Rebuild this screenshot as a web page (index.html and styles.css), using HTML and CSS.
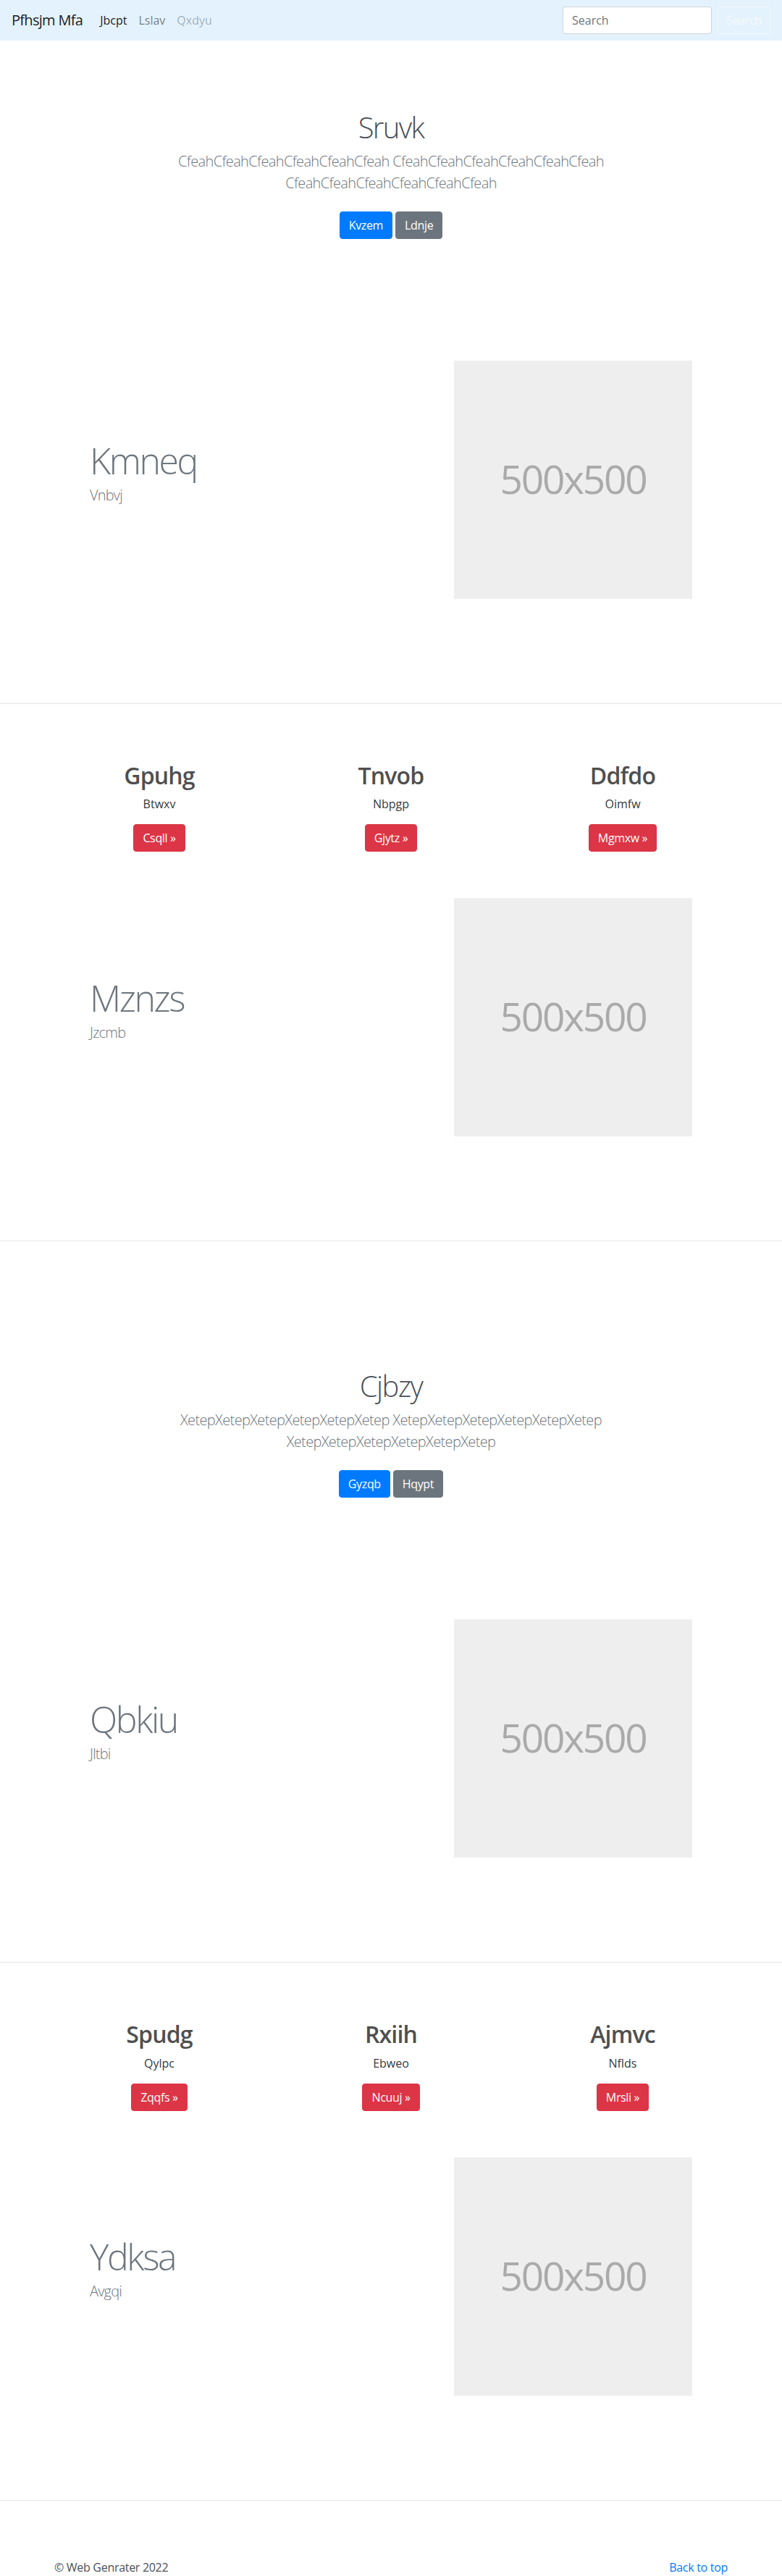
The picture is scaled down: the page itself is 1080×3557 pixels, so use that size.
FILE: index.html
```
<!DOCTYPE html>
<html lang="en">
<head>
<meta charset="utf-8">
<title>Pfhsjm Mfa</title>
<link rel="stylesheet" href="styles.css">
</head>
<body>
<nav class="navbar">
  <a class="brand" href="#">Pfhsjm Mfa</a>
  <ul class="nav-links">
    <li><a class="nav-link active" href="#">Jbcpt</a></li>
    <li><a class="nav-link" href="#">Lslav</a></li>
    <li><a class="nav-link disabled" href="#">Qxdyu</a></li>
  </ul>
  <form class="search-form">
    <input class="search-input" type="search" placeholder="Search">
    <button class="btn btn-outline-light" type="button">Search</button>
  </form>
</nav>

<main>
  <section class="hero">
    <div class="hero-inner">
      <h1 class="hero-title">Sruvk</h1>
      <p class="lead muted">CfeahCfeahCfeahCfeahCfeahCfeah CfeahCfeahCfeahCfeahCfeahCfeah CfeahCfeahCfeahCfeahCfeahCfeah</p>
      <p class="hero-actions">
        <a class="btn btn-primary" href="#">Kvzem</a>
        <a class="btn btn-secondary" href="#">Ldnje</a>
      </p>
    </div>
  </section>

  <section class="featurette">
    <div class="feat-inner">
      <div class="feat-text">
        <h2 class="feat-heading">Kmneq</h2>
        <p class="lead muted">Vnbvj</p>
      </div>
      <div class="placeholder">500x500</div>
    </div>
  </section>

  <hr class="divider">

  <section class="marketing">
    <div class="col">
      <h2 class="col-heading">Gpuhg</h2>
      <p class="col-text">Btwxv</p>
      <p class="col-action"><a class="btn btn-danger" href="#">Csqll &raquo;</a></p>
    </div>
    <div class="col">
      <h2 class="col-heading">Tnvob</h2>
      <p class="col-text">Nbpgp</p>
      <p class="col-action"><a class="btn btn-danger" href="#">Gjytz &raquo;</a></p>
    </div>
    <div class="col">
      <h2 class="col-heading">Ddfdo</h2>
      <p class="col-text">Oimfw</p>
      <p class="col-action"><a class="btn btn-danger" href="#">Mgmxw &raquo;</a></p>
    </div>
  </section>

  <section class="featurette">
    <div class="feat-inner">
      <div class="feat-text">
        <h2 class="feat-heading">Mznzs</h2>
        <p class="lead muted">Jzcmb</p>
      </div>
      <div class="placeholder">500x500</div>
    </div>
  </section>

  <hr class="divider">

  <section class="hero">
    <div class="hero-inner">
      <h1 class="hero-title">Cjbzy</h1>
      <p class="lead muted">XetepXetepXetepXetepXetepXetep XetepXetepXetepXetepXetepXetep XetepXetepXetepXetepXetepXetep</p>
      <p class="hero-actions">
        <a class="btn btn-primary" href="#">Gyzqb</a>
        <a class="btn btn-secondary" href="#">Hqypt</a>
      </p>
    </div>
  </section>

  <section class="featurette">
    <div class="feat-inner">
      <div class="feat-text">
        <h2 class="feat-heading">Qbkiu</h2>
        <p class="lead muted">Jltbi</p>
      </div>
      <div class="placeholder">500x500</div>
    </div>
  </section>

  <hr class="divider">

  <section class="marketing">
    <div class="col">
      <h2 class="col-heading">Spudg</h2>
      <p class="col-text">Qylpc</p>
      <p class="col-action"><a class="btn btn-danger" href="#">Zqqfs &raquo;</a></p>
    </div>
    <div class="col">
      <h2 class="col-heading">Rxiih</h2>
      <p class="col-text">Ebweo</p>
      <p class="col-action"><a class="btn btn-danger" href="#">Ncuuj &raquo;</a></p>
    </div>
    <div class="col">
      <h2 class="col-heading">Ajmvc</h2>
      <p class="col-text">Nflds</p>
      <p class="col-action"><a class="btn btn-danger" href="#">Mrsli &raquo;</a></p>
    </div>
  </section>

  <section class="featurette">
    <div class="feat-inner">
      <div class="feat-text">
        <h2 class="feat-heading">Ydksa</h2>
        <p class="lead muted">Avgqi</p>
      </div>
      <div class="placeholder">500x500</div>
    </div>
  </section>

  <hr class="divider">
</main>

<footer class="footer">
  <p class="footer-copy">&copy; Web Genrater 2022</p>
  <a class="back-top" href="#">Back to top</a>
</footer>
</body>
</html>
```
FILE: styles.css
```
* {
  box-sizing: border-box;
}

html, body {
  margin: 0;
  padding: 0;
}

body {
  font-family: "Open Sans", "Noto Sans", "Liberation Sans", sans-serif;
  font-size: 16px;
  line-height: 1.5;
  color: #212529;
  background: #fff;
}

a {
  text-decoration: none;
}

p, h1, h2 {
  margin: 0;
}

/* ---------- navbar ---------- */
.navbar {
  display: flex;
  align-items: center;
  height: 56px;
  padding: 8px 16px;
  background: #e3f2fd;
}

.brand {
  font-size: 20px;
  line-height: 30px;
  padding: 5px 0;
  margin-right: 16px;
  color: rgba(0, 0, 0, 0.9);
  letter-spacing: -0.7px;
}

.nav-links {
  display: flex;
  list-style: none;
  margin: 0;
  padding: 0;
  flex: 1;
}

.nav-link {
  display: block;
  padding: 8px;
  line-height: 24px;
  color: rgba(0, 0, 0, 0.5);
}

.nav-link.active {
  color: rgba(0, 0, 0, 0.9);
}

.nav-link.disabled {
  color: rgba(0, 0, 0, 0.3);
}

.search-form {
  display: flex;
  align-items: center;
  gap: 8px;
}

.search-input {
  width: 206px;
  height: 38px;
  padding: 6px 12px;
  font-family: inherit;
  font-size: 16px;
  color: #495057;
  background: #fff;
  border: 1px solid #ced4da;
  border-radius: 4px;
  outline: none;
}

.search-input::placeholder {
  color: #6c757d;
}

/* ---------- buttons ---------- */
.btn {
  display: inline-block;
  height: 38px;
  padding: 6px 12px;
  font-family: inherit;
  font-size: 16px;
  line-height: 24px;
  letter-spacing: -0.35px;
  border: 1px solid transparent;
  border-radius: 4px;
  color: #fff;
  white-space: nowrap;
}

.btn-outline-light {
  width: 73px;
  background: transparent;
  color: #f8f9fa;
  border-color: #f8f9fa;
  padding: 6px 0;
  text-align: center;
}

.btn-primary {
  background: #007bff;
  border-color: #007bff;
}

.btn-secondary {
  background: #6c757d;
  border-color: #6c757d;
}

.btn-danger {
  background: #dc3545;
  border-color: #dc3545;
}

/* ---------- hero ---------- */
.hero {
  padding: 96px 0;
  text-align: center;
}

.hero-inner {
  max-width: 640px;
  margin: 0 auto;
  padding: 0 15px;
}

.hero-title {
  font-size: 40px;
  font-weight: 300;
  line-height: 48px;
  margin-bottom: 8px;
  color: #495057;
  letter-spacing: -1.6px;
}

.lead {
  font-size: 20px;
  font-weight: 300;
  line-height: 30px;
}

.muted {
  color: #6c757d;
}

.hero .lead {
  margin-bottom: 16px;
  letter-spacing: -0.64px;
}

.hero-actions {
  display: flex;
  justify-content: center;
  gap: 4px;
  padding: 8px 0;
}

/* ---------- featurette ---------- */
.featurette {
  padding: 64px 0;
}

.feat-inner {
  max-width: 960px;
  margin: 0 auto;
  padding: 0 64px;
  display: flex;
  align-items: center;
}

.feat-text {
  flex: 1;
}

.feat-heading {
  font-size: 50px;
  font-weight: 300;
  line-height: 1;
  margin-bottom: 8px;
  color: #6c757d;
  letter-spacing: -2.4px;
}

.feat-text .lead {
  margin-bottom: 16px;
  letter-spacing: -0.8px;
}

.placeholder {
  flex: none;
  width: 329px;
  height: 329px;
  background: #eeeeee;
  color: #aaaaaa;
  font-size: 55px;
  line-height: 1;
  letter-spacing: -2.2px;
  display: flex;
  align-items: center;
  justify-content: center;
  padding-bottom: 4px;
}

/* ---------- divider ---------- */
.divider {
  margin: 80px 0;
  height: 0;
  border: 0;
  border-top: 1px solid rgba(0, 0, 0, 0.1);
}

/* ---------- marketing ---------- */
.marketing {
  max-width: 960px;
  margin: 0 auto;
  display: grid;
  grid-template-columns: repeat(3, 1fr);
}

.col {
  padding: 0 15px;
  text-align: center;
}

.col-heading {
  font-size: 32px;
  font-weight: 600;
  line-height: 1.2;
  margin-bottom: 8px;
  color: #4f4f4f;
  letter-spacing: -0.8px;
}

.col-text {
  margin-bottom: 16px;
  color: #343a40;
}

.col-action {
  display: flex;
  justify-content: center;
}

/* ---------- footer ---------- */
.footer {
  max-width: 960px;
  margin: 0 auto;
  padding: 0 15px;
  display: flex;
  justify-content: space-between;
  line-height: 24px;
}

.footer-copy {
  color: #495057;
  letter-spacing: -0.3px;
}

.back-top {
  color: #007bff;
  letter-spacing: -0.3px;
}
```
